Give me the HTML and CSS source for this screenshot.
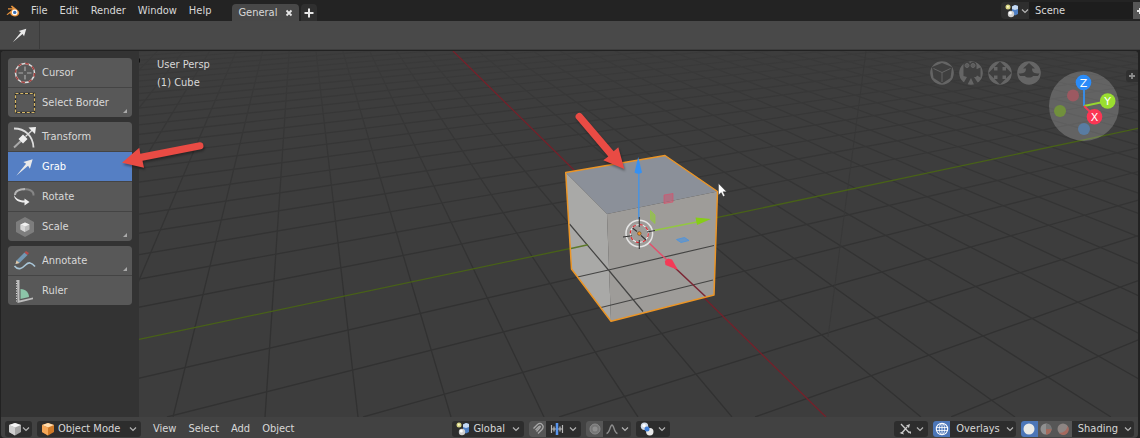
FILE: index.html
```html
<!DOCTYPE html>
<html lang="en">
<head>
<meta charset="utf-8">
<title>Scene editor</title>
<link rel="stylesheet" href="styles.css">
</head>
<body>
<svg class="defs" aria-hidden="true">
  <defs>
    <symbol id="chevron" viewBox="0 0 8 8"><path d="M1 2.5l3 3 3-3" fill="none" stroke="#b4b4b4" stroke-width="1.2"/></symbol>
    <symbol id="scene" viewBox="0 0 14 14">
      <path d="M7 2.500l3-1.500 3 1v8l-3 1.500L7 10z" fill="#4e7fc4"/><path d="M7 2.500l3-1.500 3 1v3l-3 1L7 5z" fill="#c5d9f2"/>
      <circle cx="3" cy="3" r="2.500" fill="#d8d584"/><circle cx="2.800" cy="2.800" r="1" fill="#fffbd0"/>
      <circle cx="6" cy="10" r="3.200" fill="#cfcfcf"/><circle cx="5.300" cy="9" r="1.500" fill="#fff"/>
    </symbol>
    <symbol id="move" viewBox="0 0 20 20"><path d="M2 18L11 7 8.500 5.500 17 3 14.500 11.500 12.800 8.800z" fill="#e9e9e9"/></symbol>
    <symbol id="cube-grey" viewBox="0 0 14 14"><path d="M7 1l6 2v7l-6 3.500L1 10V3z" fill="#a5a5a5"/><path d="M7 1l6 2-6 2.500L1 3z" fill="#f4f4f4"/><path d="M1 3l6 2.500v8L1 10z" fill="#cfcfcf"/></symbol>
    <symbol id="cube-orange" viewBox="0 0 14 14"><path d="M7 1l6 2v7l-6 3.500L1 10V3z" fill="#d07a28"/><path d="M7 1l6 2-6 2.500L1 3z" fill="#ffdcae"/><path d="M1 3l6 2.500v8L1 10z" fill="#f5a758"/></symbol>
  </defs>
</svg>

<header class="topbar">
  <svg class="logo" viewBox="0 0 14 12" role="img" aria-label="Application menu">
    <path d="M.5 9.500L6.500 4.500H2V3.200h4.500L4.800 1.300 6 .5l5 4C15.500 8 12.500 11.500 8.800 11.500 5.500 11.500 4.200 9.500 4.300 7.900L1.500 10z" fill="#e8933c"/>
    <circle cx="8.700" cy="7.400" r="2.800" fill="#fff"/><circle cx="8.700" cy="7.400" r="1.700" fill="#3b6fb6"/>
  </svg>
  <nav class="menus" aria-label="Main menu">
    <button>File</button><button>Edit</button><button>Render</button><button>Window</button><button>Help</button>
  </nav>
  <div class="tabs">
    <div class="tab"><button class="tab-name">General</button><button class="tab-close" aria-label="Close tab"><svg viewBox="0 0 8 8"><path d="M1.500 1.500l5 5m0-5l-5 5" stroke="#e6e6e6" stroke-width="1.800"/></svg></button></div>
    <button class="tab-add" aria-label="Add tab"><svg viewBox="0 0 10 10"><path d="M5 .5v9M.5 5h9" stroke="#e6e6e6" stroke-width="2"/></svg></button>
  </div>
  <div class="scene">
    <button class="scene-pick" aria-label="Browse scene"><svg class="ic14"><use href="#scene"/></svg><svg class="chev"><use href="#chevron"/></svg></button>
    <input class="scene-name" type="text" value="Scene" aria-label="Scene name">
    <button class="scene-new" aria-label="New scene"><svg viewBox="0 0 8 8"><path d="M4 1v6M1 4h6" stroke="#e6e6e6" stroke-width="2"/></svg></button>
  </div>
</header>

<div class="toolbar">
  <button class="active-tool" aria-label="Active tool"><svg viewBox="0 0 20 20"><use href="#move"/></svg></button>
</div>

<main class="area">
  <div class="stage">
    <svg class="canvas" viewBox="0 51 1140 366" preserveAspectRatio="xMinYMin slice" role="img" aria-label="3D view with a selected cube">
      <defs>
        <linearGradient id="fade" gradientUnits="userSpaceOnUse" x1="0" y1="51" x2="0" y2="300">
          <stop offset="0" stop-color="#3a3a3a"/><stop offset="0.300" stop-color="#363636"/><stop offset="1" stop-color="#313131"/>
        </linearGradient>
      </defs>
      <path d="M0 51h1140v366H0z" fill="#3d3d3d"/>
      <g fill="none" stroke="url(#fade)" stroke-width="1.400">
        <path d="M2201-97L-4929 417M2201-97L-4733 417M2201-97L-4537 417M2201-97L-4341 417M2201-97L-4145 417M2201-97L-3949 417M2201-97L-3753 417M2201-97L-3557 417M2201-97L-3361 417M2201-97L-3165 417M2201-97L-2969 417M2201-97L-2773 417M2201-97L-2577 417M2201-97L-2381 417M2201-97L-2185 417M2201-97L-1989 417M2201-97L-1793 417M2201-97L-1597 417M2201-97L-1401 417M2201-97L-1205 417M2201-97L-1009 417M2201-97L-813 417M2201-97L-617 417M2201-97L-421 417M2201-97L-29 417M2201-97L167 417M2201-97L363 417M2201-97L559 417M2201-97L755 417M2201-97L951 417"/>
        <path d="M299-97L-375 417M299-97L-284 417M299-97L-193 417M299-97L-102 417M299-97L-11 417M299-97L81 417M299-97L173 417M299-97L265 417M299-97L358 417M299-97L451 417M299-97L544 417M299-97L638 417M299-97L732 417M299-97L921 417M299-97L1015 417M299-97L1111 417M299-97L1206 417M299-97L1302 417M299-97L1398 417M299-97L1495 417M299-97L1592 417M299-97L1689 417M299-97L1786 417M299-97L1884 417M299-97L1982 417M299-97L2081 417M299-97L2180 417M299-97L2279 417M299-97L2379 417M299-97L2479 417M299-97L2579 417M299-97L2679 417M299-97L2780 417M299-97L2881 417M299-97L2983 417M299-97L3085 417M299-97L3188 417"/>
      </g>
      <path d="M866 51L828 337" stroke="#383838" stroke-width="1"/>
      <path d="M139 339.300L639 234 1140 128" stroke="#486118" stroke-width="1.300" fill="none"/>
      <path d="M453 51L639 234 826 417" stroke="#76202a" stroke-width="1.300" fill="none"/>

      <path d="M565.700 172.500L665 155.500 717.500 191.500 607 214z" fill="#8b9099"/>
      <path d="M565.700 172.500L607 214 611 321.300 571.500 269z" fill="#a9a9a7"/>
      <path d="M607 214L717.500 191.500 714 295 611 321.300z" fill="#9e9c99"/>
      <path d="M569.500 224L608.500 270 643 311.500M577.500 277L608.500 270 714 245.500M601 307.500L713 280" fill="none" stroke="#444443" stroke-width="1.200"/>
      <path d="M571 248.500L588 244.800" stroke="#5d7a2a" stroke-width="1.500"/>
      <path d="M672 265L706 297" stroke="#7b2634" stroke-width="1.500"/>
      <path d="M565.700 172.500L665 155.500 717.500 191.500 714 295 611 321.300 571.500 269z" fill="none" stroke="#eb9526" stroke-width="1.500" stroke-linejoin="round"/>

      <path d="M638.800 172V219" stroke="#4a93e0" stroke-width="1.500"/><path d="M638.200 157L642 172.500Q638.200 175 634.500 172.500z" fill="#3590f2"/>
      <path d="M654 230.500L697 222" stroke="#93c840" stroke-width="1.500"/><path d="M711 219L695.500 217.500 697 225z" fill="#87cd17"/>
      <path d="M649 243L668 261" stroke="#e2506c" stroke-width="1.500"/><path d="M678 270L665.500 265 664.800 261 668 258.500 672 259.500z" fill="#f43a57"/>
      <path d="M664 195l9-1.500v8.500l-9 1.500z" fill="#d4506c" fill-opacity=".5" stroke="#d9506c" stroke-opacity=".8" stroke-width=".8"/>
      <path d="M650.500 210.500l4.500 4.500v8.500l-4.500-4z" fill="#93c840" fill-opacity=".7" stroke="#93c840" stroke-width=".7"/>
      <path d="M676.500 239.500l8-2 4.500 3-8 2z" fill="#4a93e0" fill-opacity=".6" stroke="#4a93e0" stroke-width=".8"/>
      <circle cx="639.300" cy="233.500" r="13.300" fill="none" stroke="#e4e4e4" stroke-width="1.500"/>
      <circle cx="639.300" cy="233.500" r="9" fill="none" stroke="#eee" stroke-width="1.200"/>
      <circle cx="639.300" cy="233.500" r="9" fill="none" stroke="#d92c35" stroke-width="1.200" stroke-dasharray="3.500 3.500"/>
      <path d="M639.300 217v10m0 13v9M623 237l9-1.200m15-3.800l8-1.500M632.500 228l4.500 3.500m4 4l5 4.500" stroke="#343434" stroke-width="1.100"/>
      <circle cx="639.300" cy="233.500" r="1.800" fill="#f0962c" stroke="#703f10" stroke-width=".6"/>
      <path d="M718.500 183.500v11.500l2.700-2.400 2 4 1.700-.8-1.900-4h3.500z" fill="#fff" stroke="#333" stroke-width=".4"/>
      <path d="M139.500 58.500v4" stroke="#111"/>
    </svg>

    <aside class="tools" aria-label="Tools">
      <div class="tool-group">
        <button class="tool"><svg viewBox="0 0 24 24"><circle cx="12" cy="12" r="9.500" fill="none" stroke="#ddd" stroke-width="1.500"/><circle cx="12" cy="12" r="9.500" fill="none" stroke="#a5423f" stroke-width="1.500" stroke-dasharray="3.730"/><path d="M12 5.500v4.500m0 4v4.500M5.500 12H10m4 0h4.500" stroke="#aaa" stroke-width="1.200"/></svg>Cursor</button>
        <button class="tool more"><svg viewBox="0 0 24 24"><path d="M2.500 2.500h19v19h-19z" fill="none" stroke="#222" stroke-width="1.400"/><path d="M2.500 2.500h19v19h-19z" fill="none" stroke="#d6b765" stroke-width="1.200" stroke-dasharray="3 1.750"/></svg>Select Border</button>
      </div>
      <div class="tool-group">
        <button class="tool"><svg viewBox="0 0 24 24"><path d="M1 3.500C12 3.500 20 11 20.500 22.500" fill="none" stroke="#ddd" stroke-width="1.800"/><path d="M1 22.500L9 15" stroke="#aaa" stroke-width="2"/><path d="M12.500 11.500l8-7.500" stroke="#ddd" stroke-width="1.300"/><path d="M10 9.500l4.500 4.500-4.500 4.500L5.500 14zM15.500 2.500l7.500-.5-1 7z" fill="#eee"/></svg>Transform</button>
        <button class="tool selected" aria-pressed="true"><svg viewBox="-1 -1 23 23"><use href="#move" width="21" height="21"/></svg>Grab</button>
        <button class="tool"><svg viewBox="0 0 24 24"><path d="M20.500 10.500C21 5.500 15 3.500 10 4.500" fill="none" stroke="#858585" stroke-width="2"/><path d="M12 4C6 4 2 6.500 2 10" fill="none" stroke="#b5b5b5" stroke-width="2"/><path d="M1 10c0 5 5 7.500 10.500 7.500v3L16.500 17l-5-3.500v2C7 15.500 3 14 1 10z" fill="#eee"/></svg>Rotate</button>
        <button class="tool more"><svg viewBox="0 0 24 24"><path d="M12 2l9 5v10l-9 5-9-5V7z" fill="#7d7d7d"/><path d="M12 7.500l4.500 2v5L12 17l-4.500-2.500v-5z" fill="#bdbdbd"/><path d="M12 7.500l4.500 2L12 11.500l-4.500-2z" fill="#f0f0f0"/><path d="M7.500 9.500l4.500 2V17l-4.500-2.500z" fill="#d7d7d7"/></svg>Scale</button>
      </div>
      <div class="tool-group">
        <button class="tool more"><svg viewBox="0 0 24 24"><path d="M1.500 17c4 5 8 2 11-1s6-3 9.500 1.500" fill="none" stroke="#a9c6d8" stroke-width="1.600"/><path d="M3.500 11.500l8-8 3 2.500-8 8-4 1z" fill="#7397b3"/><path d="M11.500 3.500l1.500-1.500 3 2-1.500 2z" fill="#b44b4b"/><path d="M3.500 11.500l-1 3.500 4-1z" fill="#e5c9a5"/></svg>Annotate</button>
        <button class="tool"><svg viewBox="0 0 24 24"><path d="M7.500 10C13 10 16 14 16 18l-8.500 2z" fill="#8cc5a9"/><path d="M4 1h2.500v20.500L20 18.500v1.800L4.500 24z" fill="#bcbcbc"/><path d="M3.500 1.500v21" stroke="#ddd" stroke-dasharray="1 1.500"/></svg>Ruler</button>
      </div>
    </aside>

    <p class="view-info">User Persp<br>(1) Cube</p>

    <div class="gizmos">
      <button class="nav" aria-label="Toggle perspective"><svg viewBox="0 0 24 24"><circle cx="12" cy="12" r="11.800"/><path class="cut" d="M2 6L12 2l10 4-1.500 11L12 22.500 3.500 17z"/><path class="lit" d="M3.500 7.500l8.500 4 8.500-4M12 11.500V21"/></svg></button>
      <button class="nav" aria-label="Camera view"><svg viewBox="0 0 24 24"><circle cx="12" cy="12" r="11.800"/><path class="cut" d="M4.500 3.500a3.300 3.300 0 0 1 6.500-1 3.500 3.500 0 0 1 6.500 1.500V8h.5l3.500-1.500v10L18 14.500 17 16h-2l4 6-4 1.500-3-6.500-3.500 6.500-4-1.500L8 16l-3.500-1z"/><circle class="lit" cx="8" cy="4.500" r="2"/><circle class="lit" cx="14" cy="4.500" r="2"/></svg></button>
      <button class="nav" aria-label="Pan"><svg viewBox="0 0 24 24"><circle cx="12" cy="12" r="11.800"/><path class="cut" d="M12 .5L23.500 12 12 23.500.5 12z"/><path class="dots" d="M6 6h3.500v3.500H6zM14.500 6H18v3.500h-3.500zM6 14.500h3.500V18H6zM14.500 14.500H18V18h-3.500z"/></svg></button>
      <button class="nav" aria-label="Zoom"><svg viewBox="0 0 24 24"><circle cx="12" cy="12" r="11.800"/><path class="cut" d="M12 2l6 5.500h-3c0 4 2 5 7.500 5L21 15H16c-1 2-7 2-8 0H3l-1.500-2.500c5.500 0 7.500-1 7.500-5H6z"/></svg></button>
      <svg class="axes" viewBox="0 0 70 70" role="img" aria-label="View orientation">
        <circle cx="35" cy="35" r="35" fill="#fff" fill-opacity=".2"/>
        <circle cx="24" cy="24.500" r="6" fill="#9c5961"/><circle cx="11" cy="40" r="6" fill="#71903c"/><circle cx="35" cy="58" r="6" fill="#597ca2"/>
        <path d="M35 35V12" stroke="#3590f2" stroke-width="1.800"/><path d="M35 35l24-5" stroke="#97d530" stroke-width="1.800"/><path d="M35 35l11 10.500" stroke="#f43a57" stroke-width="1.800"/>
        <circle cx="34.500" cy="11.500" r="7.800" fill="#2a8cf9"/><circle cx="58.700" cy="30" r="7.800" fill="#9ade30"/><circle cx="45.500" cy="45.700" r="7.800" fill="#fb3654"/>
        <text x="34.500" y="15.500">Z</text><text x="58.700" y="34">Y</text><text x="45.500" y="49.700">X</text>
      </svg>
      <button class="expand" aria-label="Show sidebar"><svg viewBox="0 0 8 8"><path d="M4 1v6M1 4h6" stroke="#8c8c8c" stroke-width="1.800"/></svg></button>
    </div>

    <svg class="notes" viewBox="0 51 1140 366" preserveAspectRatio="xMinYMin slice" aria-hidden="true">
      <g fill="#e94b44">
        <path d="M122 162.700L139.300 147.700 140.300 153.800 199.500 142.300A3.600 3.600 0 0 1 201 149.300L142.500 160.700 144 167.700z"/>
        <path d="M624.300 169L603.300 160.300 608.300 156.500 576.300 118.800A3.600 3.600 0 0 1 582.300 114.500L613.700 151.300 618.300 147.300z"/>
      </g>
    </svg>
  </div>

  <footer class="viewbar">
    <button class="box" aria-label="Editor type"><svg class="ic14"><use href="#cube-grey"/></svg><svg class="chev"><use href="#chevron"/></svg></button>
    <label class="box pick mode"><svg class="ic14"><use href="#cube-orange"/></svg><select aria-label="Mode"><option>Object Mode</option></select><svg class="chev"><use href="#chevron"/></svg></label>
    <nav class="menus" aria-label="View menu"><button>View</button><button>Select</button><button>Add</button><button>Object</button></nav>
    <div class="middle">
      <label class="box pick orient"><svg class="ic14"><use href="#scene"/></svg><select aria-label="Orientation"><option>Global</option></select><svg class="chev"><use href="#chevron"/></svg></label>
      <div class="split">
        <button class="cell dim" aria-label="Snap"><svg viewBox="0 0 14 14"><path d="M2.500 6.500l4-4C10-.5 14 4 11 7.500L7 11.500" fill="none" stroke="#a8a8a8" stroke-width="1.300"/><path d="M4.500 8l3.500-3.500c1-1 2 0 1 1L5.500 9.500" fill="none" stroke="#a8a8a8" stroke-width="1.200"/></svg></button>
        <button class="cell wide" aria-label="Snap target"><svg viewBox="0 0 14 14"><path d="M1.500 3v8M4 4.500v5M10 4.500v5M12.500 3v8M1 7h12" stroke="#b8b8b8" stroke-width="1.200"/><path d="M7 1v12" stroke="#5a96ee" stroke-width="2.500"/></svg><svg class="chev"><use href="#chevron"/></svg></button>
      </div>
      <div class="split faded">
        <button class="cell dim" aria-label="Proportional editing"><svg viewBox="0 0 14 14"><circle cx="7" cy="7" r="5" fill="#777" stroke="#8c8c8c"/><circle cx="7" cy="7" r="2.500" fill="#8f8f8f"/></svg></button>
        <button class="cell mid" aria-label="Falloff"><svg viewBox="0 0 14 14"><path d="M1.500 11.500C5 11 5 3 7 3s2 8 5.500 8.500" fill="none" stroke="#8c8c8c" stroke-width="1.400"/></svg><svg class="chev"><use href="#chevron"/></svg></button>
      </div>
      <button class="box pivot" aria-label="Pivot point"><svg class="ic14" viewBox="0 0 14 14"><circle cx="4.500" cy="4.200" r="3.700" fill="#d2dcea"/><circle cx="9.800" cy="9.800" r="3.700" fill="#e8e8e8"/><circle cx="7" cy="7" r="2.500" fill="#3f7ed8"/><circle cx="4" cy="3.500" r="1.600" fill="#fff"/></svg><svg class="chev"><use href="#chevron"/></svg></button>
    </div>
    <div class="right">
      <button class="box pivot" aria-label="Gizmos"><svg class="ic14" viewBox="0 0 14 14"><path d="M3 2l8.500 9M3.500 11.500L9 5" stroke="#c9c9c9" stroke-width="1.300"/><path d="M8 3.500l4-1.500-1 4zM1.500 11l3-1.500 1.500 3zM10 9.500h3v2.500z" fill="#c9c9c9"/></svg><svg class="chev"><use href="#chevron"/></svg></button>
      <div class="split">
        <button class="cell on" aria-label="Show overlays"><svg viewBox="0 0 14 14"><circle cx="7" cy="7" r="5.700" fill="none" stroke="#fff" stroke-width="1.100"/><ellipse cx="7" cy="7" rx="2.700" ry="5.700" fill="none" stroke="#fff" stroke-width=".8"/><path d="M1.500 5.500h11M1.500 8.500h11M7 1v12" stroke="#fff" stroke-width=".8"/></svg></button>
        <button class="cell named overlays">Overlays<svg class="chev"><use href="#chevron"/></svg></button>
      </div>
      <div class="split">
        <button class="cell on" aria-label="Solid"><svg viewBox="0 0 14 14"><circle cx="7" cy="7" r="5.500" fill="#e9e9e6"/></svg></button>
        <button class="cell dim" aria-label="Material preview"><svg viewBox="0 0 14 14"><circle cx="7" cy="7" r="5.500" fill="#909090"/><path d="M7 7h5.500A5.500 5.500 0 0 1 7 12.500z" fill="#a36a5c"/><path d="M7 1.500A5.500 5.500 0 0 1 12.500 7H7z" fill="#777"/></svg></button>
        <button class="cell dim" aria-label="Rendered"><svg viewBox="0 0 14 14"><circle cx="7" cy="7" r="5.500" fill="#8d8583"/><path d="M3 11C8 11 11 8 11.500 4a5.500 5.500 0 0 1-8.500 7z" fill="#a5695e"/></svg></button>
        <button class="cell named shading">Shading<svg class="chev"><use href="#chevron"/></svg></button>
      </div>
    </div>
  </footer>
</main>
</body>
</html>
```

FILE: styles.css
```css
* { box-sizing: border-box; }

body {
  margin: 0;
  min-height: 100vh;
  display: flex;
  flex-direction: column;
  overflow: hidden;
  background: #222;
  color: #d8d8d8;
  font: 11px/16px "DejaVu Sans Condensed", "DejaVu Sans", sans-serif;
}

button, input, select {
  margin: 0;
  padding: 0;
  border: 0;
  background: none;
  color: inherit;
  font: inherit;
}

button { display: flex; align-items: center; }
svg { display: block; flex: none; }
.defs { position: absolute; width: 0; height: 0; }
.ic14 { width: 14px; height: 14px; }
.chev { width: 8px; height: 8px; }

/* Top bar */
.topbar {
  display: flex;
  height: 21px;
  padding-left: 6px;
  align-items: center;
  background: #232323;
}
.logo { width: 14px; height: 12px; }
.menus { display: flex; gap: 12px; }
.topbar .menus { margin-left: 11px; }
.tabs { display: flex; gap: 2px; height: 17px; align-self: flex-end; margin-left: 21px; }
.tab { display: flex; gap: 8px; padding: 0 6px; border-radius: 4px 4px 0 0; background: #484848; }
.tab-close svg { width: 8px; height: 8px; }
.tab-add { padding: 0 3px; border-radius: 4px 4px 0 0; background: #2f2f2f; }
.tab-add svg { width: 10px; height: 10px; }
.scene { display: flex; height: 17px; margin-left: auto; }
.scene-pick { width: 28px; padding-left: 4px; gap: 2px; border-radius: 4px 0 0 4px; background: #2e2e2e; }
.scene-name { width: 104px; padding: 0 6px; background: #1d1d1d; }
.scene-new { width: 7px; overflow: hidden; background: #565656; }
.scene-new svg { width: 8px; height: 8px; margin-left: 3px; }

/* Active tool strip */
.toolbar { display: flex; height: 29px; background: #494949; border-bottom: 1px solid #3d3d3d; }
.active-tool { width: 40px; justify-content: center; border-right: 1px solid #3b3b3b; }
.active-tool svg { width: 18px; height: 18px; }

/* 3D view */
.area {
  flex: 1;
  display: flex;
  flex-direction: column;
  margin: 1px 2px 0 1px;
  border-radius: 4px;
  overflow: hidden;
}
.stage { position: relative; flex: 1; display: flex; min-height: 360px; overflow: hidden; background: #3d3d3d; }
.canvas, .notes { position: absolute; top: 0; left: -1px; width: 100vw; height: 100%; }
.notes { pointer-events: none; filter: drop-shadow(1px 2px 1px rgba(0, 0, 0, .35)); }

.tools { position: relative; display: flex; flex-direction: column; gap: 5px; width: 138px; padding: 7px; background: #333; }
.tool-group { display: flex; flex-direction: column; gap: 1px; border-radius: 4px; overflow: hidden; background: #444; }
.tool { position: relative; height: 29px; padding-left: 5px; gap: 5px; background: #585858; }
.tool svg { width: 24px; height: 24px; }
.tool.selected { background: #557fc4; color: #fff; }
.tool.more::after {
  content: "";
  position: absolute;
  right: 5px;
  bottom: 4px;
  border: 2px solid;
  border-color: transparent #aaa #aaa transparent;
}

.view-info { position: relative; margin: 5px 0 0 18px; line-height: 18px; }

.gizmos { position: relative; display: flex; align-items: flex-start; margin-left: auto; padding-top: 10px; }
.nav { width: 24px; height: 24px; margin-right: 5px; }
.nav svg { width: 24px; height: 24px; fill: #656565; }
.nav .cut { fill: #3f3f3f; }
.nav .lit { fill: #5c5c5c; stroke: #656565; }
.nav path.lit { fill: none; }
.axes { width: 70px; height: 70px; margin: 10px 7px 0 3px; }
.axes text { fill: #fff; font: 11px "DejaVu Sans", sans-serif; text-anchor: middle; }
.expand { width: 12px; height: 12px; margin-top: 9px; justify-content: center; border-radius: 3px 0 0 3px; background: #303030; }
.expand svg { width: 8px; height: 8px; }

/* View header */
.viewbar { display: flex; align-items: center; height: 21px; padding: 2px 4px 0; background: #424242; }
.box { display: flex; align-items: center; height: 16px; padding: 0 4px; border-radius: 3px; background: #2d2d2d; }
.box .chev { margin-left: auto; }
.viewbar > .box:first-child { width: 27px; padding: 0 2px 0 3px; }
.pick select { appearance: none; flex: 1; min-width: 0; padding-left: 3px; }
.mode { width: 104px; margin-left: 5px; }
.orient { width: 72px; }
.viewbar .menus { margin-left: 12px; }
.middle, .right { display: flex; gap: 5px; }
.middle { margin: 0 auto 0 158px; }
.split { display: flex; height: 16px; border-radius: 3px; overflow: hidden; background: #2d2d2d; }
.split.faded { background: #363636; }
.cell { width: 17px; justify-content: center; }
.cell > svg:first-child:not(.chev) { width: 14px; height: 14px; }
.cell.dim { background: #565656; }
.cell.on { background: #4c76b8; }
.cell.wide { width: 35px; gap: 5px; }
.cell.mid { width: 28px; gap: 2px; }
.cell.named { width: auto; padding: 0 2px 0 6px; gap: 6px; }
.pivot { width: 34px; }
```
